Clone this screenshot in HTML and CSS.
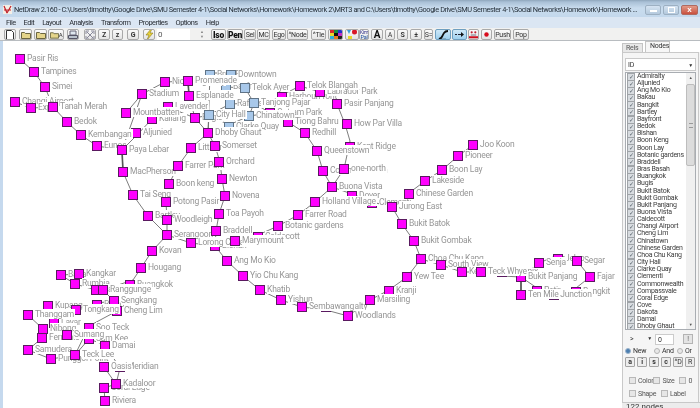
FILE: index.html
```html
<!DOCTYPE html>
<html lang="en">
<head>
<meta charset="utf-8">
<title>NetDraw 2.160</title>
<link rel="stylesheet" href="styles.css">
</head>
<body>
<div class="app">
  <header class="titlebar">
    <svg class="appicon" width="9" height="9" viewBox="0 0 9 9"><rect width="9" height="9" fill="#f4efe6"/><path d="M1 1l3 7M4 8l4-7M1 5h7" stroke="#c0202a" stroke-width="1.2" fill="none"/></svg>
    <div class="title">NetDraw 2.160 - C:\Users\timothy\Google Drive\SMU Semester 4-1\Social Networks\Homework\Homework 2\MRT3 and C:\Users\timothy\Google Drive\SMU Semester 4-1\Social Networks\Homework\Homework ...</div>
    <div class="winbtns">
      <div class="winbtn"><i class="wmin"></i></div>
      <div class="winbtn"><i class="wmax"></i></div>
      <div class="winbtn close"><i class="wx">x</i></div>
    </div>
  </header>
  <nav class="menubar">
    <span>File</span><span>Edit</span><span>Layout</span><span>Analysis</span><span>Transform</span><span>Properties</span><span>Options</span><span>Help</span>
  </nav>
  <div class="toolbar">
    <button class="tb w12"><svg width="8" height="10" viewBox="0 0 8 10"><path d="M.5.5h5l2 2v7h-7z" fill="#fff" stroke="#333"/></svg></button>
    <button class="tb w13 g3"><svg width="10" height="8" viewBox="0 0 10 8"><path d="M.5 7.5v-6h3l1 1h5v5z" fill="#e4d48a" stroke="#6b6640"/></svg></button>
    <button class="tb w13 g2"><svg width="10" height="8" viewBox="0 0 10 8"><path d="M.5 7.5v-6h3l1 1h5v5z" fill="#e4d48a" stroke="#6b6640"/></svg></button>
    <button class="tb w16 g1"><svg width="9" height="8" viewBox="0 0 10 8"><path d="M.5 7.5v-6h3l1 1h5v5z" fill="#e4d48a" stroke="#6b6640"/></svg><b class="mini">A</b></button>
    <button class="tb w12 g3"><svg width="10" height="10" viewBox="0 0 10 10"><path d="M2 1h6v4H2z" fill="#dfe7ef" stroke="#667"/><path d="M.5 5.5h9v3h-9z" fill="#b9c2cc" stroke="#556"/></svg></button>
    <button class="tb w12 g5"><svg width="10" height="10" viewBox="0 0 10 10"><path d="M1 4V1h3M6 1h3v3M9 6v3H6M4 9H1V6M2 2l6 6M8 2L2 8" stroke="#889" fill="none"/></svg></button>
    <button class="tb w12 g2 bold">Z</button>
    <button class="tb w11 g2 small">z</button>
    <button class="tb w12 g4 bold">G</button>
    <button class="tb w12 g4"><svg width="9" height="11" viewBox="0 0 9 11"><path d="M6 0L1 6h3L2 11l6-7H5l2-4z" fill="#e8d23a" stroke="#8a7a20" stroke-width=".6"/></svg></button>
    <div class="numfield g2">0</div>
    <div class="spin"><i>&#9650;</i><i>&#9660;</i></div>
    <button class="tb w15 g4 heavy">Iso</button>
    <button class="tb w16 g1 heavy">Pen</button>
    <button class="tb w12 g1">Sel</button>
    <button class="tb w13 g1">MC</button>
    <button class="tb w14 g2">Ego</button>
    <button class="tb w21 g1">^Node</button>
    <button class="tb w15 g3">^Tie</button>
    <button class="tb w15 g2"><svg width="12" height="11" viewBox="0 0 12 11"><path fill="#d8262c" d="M0 0h4v4H0z"/><path fill="#1d8c38" d="M4 0h4v4H4z"/><path fill="#2034c8" d="M8 0h4v4H8z"/><path fill="#e8d82a" d="M0 4h4v3H0z"/><path fill="#101010" d="M4 4h4v3H4z"/><path fill="#c030c0" d="M8 4h4v3H8z"/><path fill="#30b0d8" d="M0 7h4v4H0z"/><path fill="#e87820" d="M4 7h4v4H4z"/><path fill="#202020" d="M8 7h4v4H8z"/></svg></button>
    <button class="tb w14 g2"><svg width="11" height="11" viewBox="0 0 11 11"><path d="M0 1l4 0-2 4z" fill="#3aa0d8"/><circle cx="7.500" cy="3" r="2.500" fill="#d81828"/><rect x="1" y="7" width="4" height="4" fill="#e8d82a"/></svg></button>
    <button class="tb w10 kim"><span>Kim</span><span class="pal">Pal</span></button>
    <button class="tb w12 g2 bigA">A</button>
    <button class="tb w10 g2 smallA">A</button>
    <button class="tb w11 g2 bold">S</button>
    <button class="tb w12 g2 bold">&#177;</button>
    <button class="tb w9 g2">S=</button>
    <button class="tb w16 g2 active"><svg width="13" height="10" viewBox="0 0 13 10"><path d="M2 9c3 0 3-3 5-6 1-1.500 3-2 4-2" stroke="#111" stroke-width="1.800" fill="none"/><path d="M1 9.300h8" stroke="#111"/></svg></button>
    <button class="tb w15 g1 active"><svg width="11" height="7" viewBox="0 0 11 7"><path d="M1 3.500h2M4 3.500h3" stroke="#223" /><path d="M7 1l3 2.500L7 6z" fill="#111"/></svg></button>
    <button class="tb w11 g1"><svg width="10" height="10" viewBox="0 0 10 10"><path d="M0 7.500h10" stroke="#d01020" stroke-width="2"/><circle cx="3" cy="2" r="1.200" fill="#c02030"/><circle cx="7" cy="2" r="1.200" fill="#c02030"/><path d="M2 5h6" stroke="#667"/></svg></button>
    <button class="tb w11 g2"><svg width="5" height="5" viewBox="0 0 5 5"><circle cx="2.500" cy="2.500" r="2.200" fill="#d80c1c"/></svg></button>
    <button class="tb w17 g2">Push</button>
    <button class="tb w16 g2">Pop</button>
  </div>
  <main class="main">
    <div class="frame"></div>
    <section class="canvas">
      <svg class="edges" width="619" height="367" viewBox="3 41 619 367">
        <path d="M20 59L34 72L45 87L53 107L67 122L81 135L97 146L122 150L136 136L152 119L168 107L195 118L209 115L230 104L254 103L270 113L288 122L305 133L317 151L323 171L332 187L352 194L372 202L392 207L409 193L425 181L442 170L458 156L473 145"/>
        <path d="M15 102L31 108L53 107"/>
        <path d="M142 94L122 150M142 94L126 113M142 94L165 82L188 81L231 73M189 96L188 81M189 96L195 118M195 118L208 133M208 133L215 146L220 162L222 179L225 196L219 214L216 231L215 246L227 261L243 276L260 290L281 300L302 307L326 310L348 316L370 300L389 290L407 277L421 259L414 241L402 224L392 207"/>
        <path d="M122 150L123 172L133 195L148 216L167 235L152 251L141 268L133 280L103 290M208 133L191 148L178 166L169 184L166 202L167 220L167 235M167 235L191 243L215 246L235 241L258 235L278 226L298 215L315 202L332 187L344 169L350 141L345 124L337 104L320 92L300 86L282 95L270 113L249 116L229 125L209 115L208 133"/>
        <path d="M210 73L231 73L226 87L245 88L254 103L249 116M210 73L208 133M226 87L230 104"/>
        <path d="M421 259L441 265L462 272L481 272L502 276L521 277L539 263M521 277L521 295M521 277L537 288L554 299L576 288L590 277L577 261L558 255L539 263"/>
        <path d="M103 290L114 301L97 303L76 310L54 321L67 335L89 339L105 345L104 367L116 384L104 388L105 401M114 301L117 311L89 326L75 355L89 339M28 315L43 329L42 338L28 350L51 359L75 355M96 290L75 284L61 275L79 274M116 384L120 368L105 345"/>
        <path class="thick" d="M122 150L123 172M188 81L189 96M521 277L521 295"/>
      </svg>
      <div class="n" style="left:163px;top:102px"><i></i><span>Lavender</span></div>
      <div class="n" style="left:205px;top:70px"><i class="b"></i><span>Bras Basah</span></div>
      <div class="n" style="left:226px;top:70px"><i class="b"></i><span>Downtown</span></div>
      <div class="n" style="left:221px;top:82px"><i class="b"></i><span>Bayfront</span></div>
      <div class="n" style="left:224px;top:122px"><i class="b"></i><span>Clarke Quay</span></div>
      <div class="n" style="left:277px;top:92px"><i></i><span>HarbourFront</span></div>
      <div class="n" style="left:315px;top:87px"><i></i><span>Labrador Park</span></div>
      <div class="n" style="left:131px;top:128px"><i></i><span>Aljunied</span></div>
      <div class="n" style="left:190px;top:113px"><i></i><span>Bugis</span></div>
      <div class="n" style="left:147px;top:114px"><i></i><span>Kallang</span></div>
      <div class="n" style="left:15px;top:54px"><i></i><span>Pasir Ris</span></div>
      <div class="n" style="left:29px;top:67px"><i></i><span>Tampines</span></div>
      <div class="n" style="left:40px;top:82px"><i></i><span>Simei</span></div>
      <div class="n" style="left:10px;top:97px"><i></i><span>Changi Airport</span></div>
      <div class="n" style="left:26px;top:103px"><i></i><span>Expo</span></div>
      <div class="n" style="left:48px;top:102px"><i></i><span>Tanah Merah</span></div>
      <div class="n" style="left:62px;top:117px"><i></i><span>Bedok</span></div>
      <div class="n" style="left:76px;top:130px"><i></i><span>Kembangan</span></div>
      <div class="n" style="left:92px;top:141px"><i></i><span>Eunos</span></div>
      <div class="n" style="left:117px;top:145px"><i></i><span>Paya Lebar</span></div>
      <div class="n" style="left:118px;top:167px"><i></i><span>MacPherson</span></div>
      <div class="n" style="left:128px;top:190px"><i></i><span>Tai Seng</span></div>
      <div class="n" style="left:143px;top:211px"><i></i><span>Bartley</span></div>
      <div class="n" style="left:162px;top:215px"><i></i><span>Woodleigh</span></div>
      <div class="n" style="left:161px;top:197px"><i></i><span>Potong Pasir</span></div>
      <div class="n" style="left:164px;top:179px"><i></i><span>Boon keng</span></div>
      <div class="n" style="left:173px;top:161px"><i></i><span>Farrer Park</span></div>
      <div class="n" style="left:186px;top:143px"><i></i><span>Little India</span></div>
      <div class="n" style="left:210px;top:241px"><i></i><span>Bishan</span></div>
      <div class="n" style="left:253px;top:232px"><i></i><span>Caldecott</span></div>
      <div class="n" style="left:162px;top:230px"><i></i><span>Serangoon</span></div>
      <div class="n" style="left:186px;top:238px"><i></i><span>Lorong Chuan</span></div>
      <div class="n" style="left:211px;top:226px"><i></i><span>Braddell</span></div>
      <div class="n" style="left:230px;top:236px"><i></i><span>Marymount</span></div>
      <div class="n" style="left:273px;top:221px"><i></i><span>Botanic gardens</span></div>
      <div class="n" style="left:293px;top:210px"><i></i><span>Farrer Road</span></div>
      <div class="n" style="left:214px;top:157px"><i></i><span>Orchard</span></div>
      <div class="n" style="left:217px;top:174px"><i></i><span>Newton</span></div>
      <div class="n" style="left:220px;top:191px"><i></i><span>Novena</span></div>
      <div class="n" style="left:214px;top:209px"><i></i><span>Toa Payoh</span></div>
      <div class="n" style="left:210px;top:141px"><i></i><span>Somerset</span></div>
      <div class="n" style="left:147px;top:246px"><i></i><span>Kovan</span></div>
      <div class="n" style="left:136px;top:263px"><i></i><span>Hougang</span></div>
      <div class="n" style="left:222px;top:256px"><i></i><span>Ang Mo Kio</span></div>
      <div class="n" style="left:238px;top:271px"><i></i><span>Yio Chu Kang</span></div>
      <div class="n" style="left:255px;top:285px"><i></i><span>Khatib</span></div>
      <div class="n" style="left:276px;top:295px"><i></i><span>Yishun</span></div>
      <div class="n" style="left:321px;top:302px"><i></i><span>Admiralty</span></div>
      <div class="n" style="left:297px;top:302px"><i></i><span>Sembawang</span></div>
      <div class="n" style="left:343px;top:311px"><i></i><span>Woodlands</span></div>
      <div class="n" style="left:384px;top:286px"><i></i><span>Kranji</span></div>
      <div class="n" style="left:365px;top:295px"><i></i><span>Marsiling</span></div>
      <div class="n" style="left:402px;top:272px"><i></i><span>Yew Tee</span></div>
      <div class="n" style="left:416px;top:254px"><i></i><span>Choa Chu Kang</span></div>
      <div class="n" style="left:409px;top:236px"><i></i><span>Bukit Gombak</span></div>
      <div class="n" style="left:397px;top:219px"><i></i><span>Bukit Batok</span></div>
      <div class="n" style="left:347px;top:191px"><i></i><span>Dover</span></div>
      <div class="n" style="left:327px;top:182px"><i></i><span>Buona Vista</span></div>
      <div class="n" style="left:367px;top:198px"><i></i><span>Clementi</span></div>
      <div class="n" style="left:310px;top:197px"><i></i><span>Holland Village</span></div>
      <div class="n" style="left:387px;top:202px"><i></i><span>Jurong East</span></div>
      <div class="n" style="left:404px;top:189px"><i></i><span>Chinese Garden</span></div>
      <div class="n" style="left:420px;top:176px"><i></i><span>Lakeside</span></div>
      <div class="n" style="left:437px;top:165px"><i></i><span>Boon Lay</span></div>
      <div class="n" style="left:453px;top:151px"><i></i><span>Pioneer</span></div>
      <div class="n" style="left:468px;top:140px"><i></i><span>Joo Koon</span></div>
      <div class="n" style="left:318px;top:166px"><i></i><span>Commonwealth</span></div>
      <div class="n" style="left:345px;top:142px"><i></i><span>Kent Ridge</span></div>
      <div class="n" style="left:339px;top:164px"><i></i><span>one-north</span></div>
      <div class="n" style="left:312px;top:146px"><i></i><span>Queenstown</span></div>
      <div class="n" style="left:300px;top:128px"><i></i><span>Redhill</span></div>
      <div class="n" style="left:283px;top:117px"><i></i><span>Tiong Bahru</span></div>
      <div class="n" style="left:342px;top:119px"><i></i><span>How Par Villa</span></div>
      <div class="n" style="left:332px;top:99px"><i></i><span>Pasir Panjang</span></div>
      <div class="n" style="left:295px;top:81px"><i></i><span>Telok Blangah</span></div>
      <div class="n" style="left:265px;top:108px"><i></i><span>Outram Park</span></div>
      <div class="n" style="left:244px;top:111px"><i class="b"></i><span>Chinatown</span></div>
      <div class="n" style="left:225px;top:99px"><i class="b"></i><span>Raffles Place</span></div>
      <div class="n" style="left:249px;top:98px"><i class="b"></i><span>Tanjong Pajar</span></div>
      <div class="n" style="left:204px;top:110px"><i class="b"></i><span>City Hall</span></div>
      <div class="n" style="left:240px;top:83px"><i class="b"></i><span>Telok Ayer</span></div>
      <div class="n" style="left:203px;top:128px"><i></i><span>Dhoby Ghaut</span></div>
      <div class="n" style="left:160px;top:77px"><i></i><span>Nicoll Highway</span></div>
      <div class="n" style="left:184px;top:91px"><i></i><span>Esplanade</span></div>
      <div class="n" style="left:183px;top:76px"><i></i><span>Promenade</span></div>
      <div class="n" style="left:137px;top:89px"><i></i><span>Stadium</span></div>
      <div class="n" style="left:121px;top:108px"><i></i><span>Mountbatten</span></div>
      <div class="n" style="left:497px;top:267px"><i></i><span>Phoenix</span></div>
      <div class="n" style="left:516px;top:272px"><i></i><span>Bukit Panjang</span></div>
      <div class="n" style="left:436px;top:260px"><i></i><span>South View</span></div>
      <div class="n" style="left:457px;top:267px"><i></i><span>Keat Hong</span></div>
      <div class="n" style="left:476px;top:267px"><i></i><span>Teck Whye</span></div>
      <div class="n" style="left:532px;top:286px"><i></i><span>Petir</span></div>
      <div class="n" style="left:549px;top:290px"><i></i><span>Pending</span></div>
      <div class="n" style="left:571px;top:287px"><i></i><span>Bangkit</span></div>
      <div class="n" style="left:516px;top:290px"><i></i><span>Ten Mile Junction</span></div>
      <div class="n" style="left:553px;top:254px"><i></i><span>Jelapang</span></div>
      <div class="n" style="left:534px;top:258px"><i></i><span>Senja</span></div>
      <div class="n" style="left:572px;top:256px"><i></i><span>Segar</span></div>
      <div class="n" style="left:585px;top:272px"><i></i><span>Fajar</span></div>
      <div class="n" style="left:125px;top:280px"><i></i><span>Buangkok</span></div>
      <div class="n" style="left:56px;top:270px"><i></i><span>Bakau</span></div>
      <div class="n" style="left:74px;top:269px"><i></i><span>Kangkar</span></div>
      <div class="n" style="left:70px;top:279px"><i></i><span>Rumbia</span></div>
      <div class="n" style="left:91px;top:285px"><i></i><span>Ranggung</span></div>
      <div class="n" style="left:98px;top:285px"><i></i><span>Ranggunge</span></div>
      <div class="n" style="left:43px;top:301px"><i></i><span>Kupang</span></div>
      <div class="n" style="left:92px;top:300px"><i></i><span>Renjong</span></div>
      <div class="n" style="left:112px;top:306px"><i></i><span>Cheng Lim</span></div>
      <div class="n" style="left:109px;top:296px"><i></i><span>Sengkang</span></div>
      <div class="n" style="left:71px;top:305px"><i></i><span>Tongkang</span></div>
      <div class="n" style="left:49px;top:318px"><i></i><span>Layar</span></div>
      <div class="n" style="left:23px;top:310px"><i></i><span>Thanggam</span></div>
      <div class="n" style="left:38px;top:324px"><i></i><span>Nibong</span></div>
      <div class="n" style="left:84px;top:323px"><i></i><span>Soo Teck</span></div>
      <div class="n" style="left:84px;top:334px"><i></i><span>Sam Kee</span></div>
      <div class="n" style="left:37px;top:333px"><i></i><span>Fernvale</span></div>
      <div class="n" style="left:62px;top:330px"><i></i><span>Sumang</span></div>
      <div class="n" style="left:100px;top:341px"><i></i><span>Damai</span></div>
      <div class="n" style="left:46px;top:354px"><i></i><span>Punggol Point</span></div>
      <div class="n" style="left:23px;top:345px"><i></i><span>Samudera</span></div>
      <div class="n" style="left:70px;top:350px"><i></i><span>Teck Lee</span></div>
      <div class="n" style="left:115px;top:362px"><i></i><span>Meridian</span></div>
      <div class="n" style="left:99px;top:362px"><i></i><span>Oasis</span></div>
      <div class="n" style="left:99px;top:383px"><i></i><span>Coral Edge</span></div>
      <div class="n" style="left:111px;top:379px"><i></i><span>Kadaloor</span></div>
      <div class="n" style="left:100px;top:396px"><i></i><span>Riviera</span></div>
    </section>
    <aside class="side">
      <div class="tabs"><span class="tab">Rels</span><span class="tab on">Nodes</span></div>
      <div class="panel">
        <div class="select"><span>ID</span><i>&#9660;</i></div>
        <div class="listwrap">
          <ul class="list">
            <li>Admiralty</li><li>Aljunied</li><li>Ang Mo Kio</li><li>Bakau</li><li>Bangkit</li><li>Bartley</li><li>Bayfront</li><li>Bedok</li><li>Bishan</li><li>Boon Keng</li><li>Boon Lay</li><li>Botanic gardens</li><li>Braddell</li><li>Bras Basah</li><li>Buangkok</li><li>Bugis</li><li>Bukit Batok</li><li>Bukit Gombak</li><li>Bukit Panjang</li><li>Buona Vista</li><li>Caldecott</li><li>Changi Airport</li><li>Cheng Lim</li><li>Chinatown</li><li>Chinese Garden</li><li>Choa Chu Kang</li><li>City Hall</li><li>Clarke Quay</li><li>Clementi</li><li>Commonwealth</li><li>Compassvale</li><li>Coral Edge</li><li>Cove</li><li>Dakota</li><li>Damai</li><li>Dhoby Ghaut</li>
          </ul>
          <div class="scroll"><i class="up">&#9650;</i><div class="thumb"><b></b></div><i class="down">&#9660;</i></div>
        </div>
        <div class="filter">
          <div class="mini-select"><span>&gt;</span><i>&#9660;</i></div>
          <div class="mini-input">0</div>
          <div class="mini-btn">!</div>
        </div>
        <div class="radios">
          <label class="c29"><i class="radio sel"></i>New</label><label class="c23"><i class="radio"></i>And</label><label><i class="radio"></i>Or</label>
        </div>
        <div class="ops">
          <span class="bold">a</span><span class="bold">i</span><span class="bold">s</span><span class="bold">c</span><span>^D</span><span>R</span>
        </div>
        <div class="checks">
          <label class="c24"><i class="box"></i>Color</label><label class="c26"><i class="box"></i>Size</label><label><i class="box"></i>0</label>
        </div>
        <div class="checks">
          <label class="c32"><i class="box"></i>Shape</label><label><i class="box"></i>Label</label>
        </div>
      </div>
    </aside>
  </main>
  <div class="status">122 nodes</div>
</div>
</body>
</html>
```

FILE: styles.css
```css
* { box-sizing: border-box; }
html, body { margin: 0; padding: 0; }
body { width: 700px; height: 408px; overflow: hidden; font-family: Roboto, "Liberation Sans", sans-serif; }

.app { position: relative; width: 700px; height: 408px; display: flex; flex-direction: column; overflow: hidden; background: #dbe7f4; filter: blur(.35px); }

.titlebar { flex: 0 0 17px; display: flex; align-items: center; padding: 2px 2px 0 3px; background: linear-gradient(#8fa6bb 0, #a9c0d6 2px, #c9dcee 8px, #c3d8ec 100%); }
.appicon { flex: none; margin-right: 2px; }
.title { flex: 1; min-width: 0; white-space: nowrap; overflow: hidden; font-size: 7.400px; letter-spacing: -.43px; color: #26303a; }
.winbtns { display: flex; gap: 2px; margin-left: 4px; }
.winbtn { width: 16px; height: 10px; display: flex; align-items: center; justify-content: center; border: 1px solid #9db0c2; border-radius: 2px; background: linear-gradient(#d6e4f2, #b4c9dd); }
.winbtn.close { width: 17px; border-color: #b06a60; background: linear-gradient(#e29a88, #c9503e); }
.wmin { width: 7px; height: 2px; background: #fff; border: 0; margin-top: 3px; }
.wmax { width: 7px; height: 6px; border: 1px solid #fff; }
.wx { font: bold 8px/8px "Liberation Sans", sans-serif; color: #fff; }

.menubar { flex: 0 0 11px; display: flex; gap: 8px; align-items: center; padding-left: 6px; font-size: 7.400px; letter-spacing: -.5px; color: #2a2f36; background: #dbe6f3; }

.toolbar { flex: 0 0 13px; display: flex; align-items: stretch; padding: 1px 0 0 4px; background: #f1f1f0; border-bottom: 1px solid #b8bcc0; }
.tb { flex: none; padding: 0; margin: 0; height: 11px; display: flex; align-items: center; justify-content: center; overflow: hidden; font: 7px Roboto, sans-serif; letter-spacing: -.3px; color: #333; background: linear-gradient(#fafafa, #e4e4e4); border: 1px solid #a9a9a9; border-radius: 2px; }
.w9 { width: 9px; } .w10 { width: 10px; } .w11 { width: 11px; } .w12 { width: 12px; } .w13 { width: 13px; } .w14 { width: 14px; } .w15 { width: 15px; } .w16 { width: 16px; } .w17 { width: 17px; } .w21 { width: 21px; }
.g1 { margin-left: 1px; } .g2 { margin-left: 2px; } .g3 { margin-left: 3px; } .g4 { margin-left: 4px; } .g5 { margin-left: 5px; }
.bold { font-weight: 700; }
.heavy { font-size: 8.500px; font-weight: 900; color: #111; }
.small { font-size: 7px; font-weight: 700; }
.mini { font-size: 6px; font-weight: 400; }
.bigA { font-size: 10px; font-weight: 700; color: #111; }
.smallA { font-size: 6.500px; }
.kim { flex-direction: column; font-size: 5.500px; line-height: 5px; color: #3b3b8c; }
.pal { color: #2050a0; }
.active { background: linear-gradient(#cfe8f8, #9fd0ee); border-color: #6f9fc0; }
.numfield { width: 33px; height: 11px; padding-left: 1px; font-size: 8px; line-height: 11px; color: #555; background: #fff; }
.spin { flex: none; width: 10px; margin-left: 7px; display: flex; flex-direction: column; align-items: center; font-size: 4px; line-height: 5px; color: #888; }
.spin i { font-style: normal; }

.main { flex: 1; min-height: 0; display: flex; }
.frame { flex: 0 0 3px; background: #c5d9ee; }
.canvas { position: relative; flex: 1; min-width: 0; background: #fff; overflow: hidden; }
.edges { position: absolute; left: 0; top: 0; fill: none; stroke: #6e6e6e; stroke-width: .9; }
.thick { stroke: #555; stroke-width: 1.600; }

.n { position: absolute; width: 10px; height: 10px; margin: -41px 0 0 -3px; }
.n i { display: block; width: 10px; height: 10px; background: #ff00ff; border: 1px solid #5a1a60; }
.n i.b { background: #a8c8ea; border-color: #5f7386; }
.n span { position: absolute; left: 12px; top: -1px; height: 10px; padding-right: 1px; font-size: 8.500px; letter-spacing: -.2px; line-height: 10px; color: #969696; white-space: nowrap; background: #fff; }

.side { flex: 0 0 78px; min-width: 0; overflow: hidden; display: flex; flex-direction: column; background: #f3f3f3; font-size: 7px; letter-spacing: -.25px; color: #333; }
.tabs { flex: 0 0 11px; display: flex; align-items: flex-end; gap: 2px; background: #fff; }
.tab { flex: none; width: 21px; height: 9px; padding-left: 3px; line-height: 9px; color: #555; background: #e8e8e8; border: 1px solid #c4c4c4; border-bottom: 0; }
.tab.on { width: 25px; height: 11px; padding-left: 4px; color: #333; line-height: 9px; background: #f6f6f6; }
.panel { flex: 1; display: flex; flex-direction: column; margin-right: 1px; padding: 5px 2px 0; border: 1px solid #c9c9c9; border-bottom: 0; background: #f5f5f5; }
.select { flex: none; height: 13px; display: flex; align-items: center; justify-content: space-between; padding: 0 2px; background: #fff; border: 1px solid #c9c9c9; }
.select i { font-style: normal; font-size: 5px; }
.listwrap { flex: none; display: flex; height: 258px; margin-top: 1px; background: #fff; border: 1px solid #a9adb2; overflow: hidden; }
.list { flex: 1; min-width: 0; margin: 0; padding: 0; list-style: none; overflow: hidden; }
.list li { height: 7.170px; line-height: 7.170px; padding-left: 1px; display: flex; align-items: center; gap: 2px; white-space: nowrap; color: #3c3c3c; }
.list li::before { content: "\2713"; flex: none; width: 6px; height: 6px; display: block; font-size: 6px; line-height: 6px; text-align: center; color: #55606a; background: #d8dce0; border: 1px solid #a0a4a8; }
.scroll { flex: 0 0 9px; display: flex; flex-direction: column; align-items: center; background: #f0f0f0; font-size: 4px; color: #555; }
.scroll i { flex: none; height: 9px; line-height: 9px; font-style: normal; }
.up { margin-bottom: 2px; }
.down { margin-top: auto; }
.thumb { flex: none; width: 9px; height: 82px; display: flex; align-items: center; justify-content: center; background: #dcdcdc; border: 1px solid #bdbdbd; border-radius: 2px; }
.thumb b { width: 4px; height: 5px; border-top: 1px solid #999; border-bottom: 1px solid #999; }
.filter { flex: none; display: flex; align-items: center; height: 12px; margin-top: 3px; }
.mini-select { flex: none; width: 30px; display: flex; justify-content: space-between; padding: 0 3px 0 5px; }
.mini-select i { font-style: normal; font-size: 5px; }
.mini-input { flex: none; width: 19px; height: 11px; padding-left: 2px; line-height: 10px; background: #fff; border: 1px solid #ccc; }
.mini-btn { flex: none; width: 10px; height: 10px; margin-left: 9px; line-height: 8px; text-align: center; color: #666; background: #e4e4e4; border: 1px solid #b4b4b4; }
.radios { flex: none; display: flex; height: 11px; align-items: center; }
.radios label { display: flex; align-items: center; gap: 2px; }
.c23 { flex: 0 0 23px; } .c24 { flex: 0 0 24px; } .c26 { flex: 0 0 26px; } .c29 { flex: 0 0 29px; } .c32 { flex: 0 0 32px; }
.radio { flex: none; width: 6px; height: 6px; border-radius: 50%; background: #e8e8e8; border: 1px solid #b4b4b4; }
.radio.sel { background: #4c7fb0; border-color: #9cb4cc; }
.ops { flex: none; display: flex; gap: 2px; height: 11px; margin-top: 1px; }
.ops span { flex: none; width: 10px; height: 10px; line-height: 8px; text-align: center; background: #ededed; border: 1px solid #a4a4a4; border-radius: 1px; }
.checks { flex: none; display: flex; height: 13px; align-items: center; padding-left: 4px; color: #555; }
.ops + .checks { margin-top: 6px; }
.checks label { display: flex; align-items: center; gap: 2px; }
.box { flex: none; width: 7px; height: 7px; background: #e6e6e6; border: 1px solid #b8b8b8; }

.status { position: absolute; right: 0; bottom: 0; width: 78px; height: 6px; padding-left: 4px; font-size: 8px; line-height: 8px; color: #333; background: #ececec; border-top: 1px solid #c8c8c8; overflow: hidden; }
```
